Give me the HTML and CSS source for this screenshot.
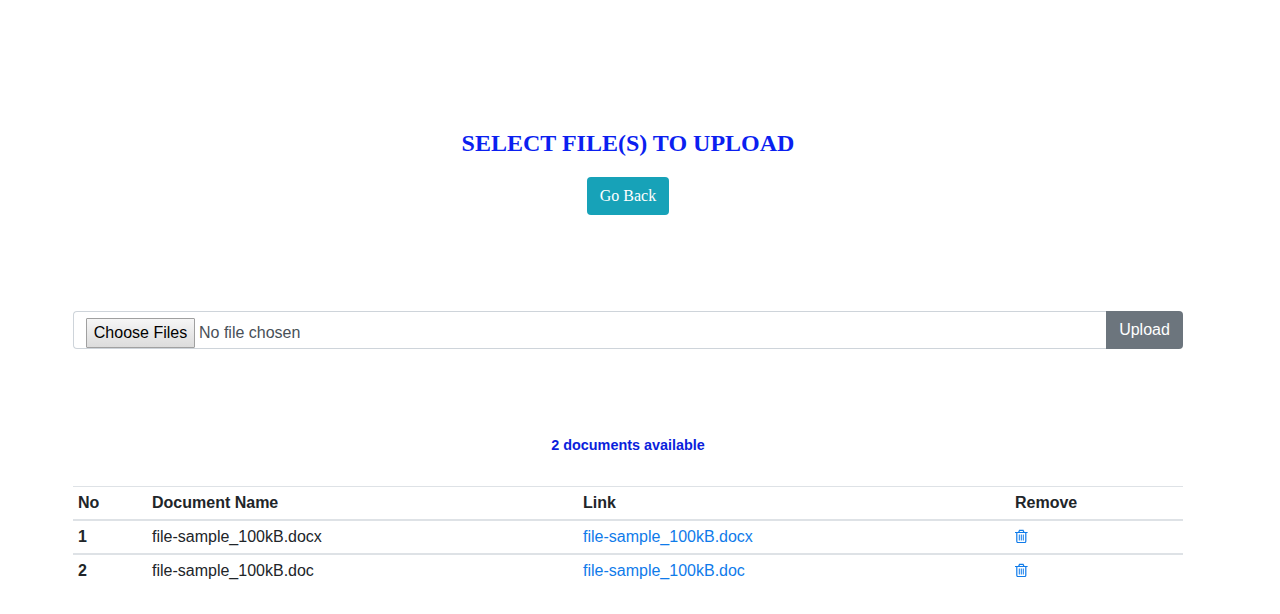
FILE: index.html
```html
<!DOCTYPE html>
<html lang="en">
<head>
<meta charset="utf-8">
<title>Upload files</title>
<link rel="stylesheet" href="styles.css">
</head>
<body>
<main class="container">
  <header class="intro">
    <h1 class="title">SELECT FILE(S) TO UPLOAD</h1>
    <a class="back" href="#">Go Back</a>
  </header>
  <form class="upload">
    <div class="field">
      <button class="choose" type="button">Choose Files</button>
      <span>No file chosen</span>
    </div>
    <button class="submit" type="button">Upload</button>
  </form>
  <h2 class="count">2 documents available</h2>
  <table class="documents">
    <colgroup><col class="col-no"><col class="col-name"><col class="col-link"><col class="col-remove"></colgroup>
    <thead>
      <tr><th>No</th><th>Document Name</th><th>Link</th><th>Remove</th></tr>
    </thead>
    <tbody>
      <tr>
        <th>1</th><td>file-sample_100kB.docx</td><td><a href="#">file-sample_100kB.docx</a></td>
        <td><a href="#" aria-label="Remove"><svg class="trash" viewBox="0 0 13 14"><path d="M0 3.5H12.6M3.7 3.3L4.5 1.4H8.1L8.9 3.3M1.8 3.5V12.3Q1.8 13.5 2.8 13.5H9.8Q10.8 13.5 10.8 12.3V3.5"/><path class="slats" d="M4.3 5.5V11.5M6.3 5.5V11.5M8.3 5.5V11.5"/></svg></a></td>
      </tr>
      <tr>
        <th>2</th><td>file-sample_100kB.doc</td><td><a href="#">file-sample_100kB.doc</a></td>
        <td><a href="#" aria-label="Remove"><svg class="trash" viewBox="0 0 13 14"><path d="M0 3.5H12.6M3.7 3.3L4.5 1.4H8.1L8.9 3.3M1.8 3.5V12.3Q1.8 13.5 2.8 13.5H9.8Q10.8 13.5 10.8 12.3V3.5"/><path class="slats" d="M4.3 5.5V11.5M6.3 5.5V11.5M8.3 5.5V11.5"/></svg></a></td>
      </tr>
    </tbody>
  </table>
</main>
</body>
</html>
```
FILE: styles.css
```css
* { box-sizing: border-box; }
body {
  margin: 0;
  background: #fff;
  color: #212529;
  font: 16px/24px "Liberation Sans", Arial, sans-serif;
}
a { color: #0f7bea; text-decoration: none; }
.container { width: 1110px; margin-left: 73px; padding-top: 129px; }
.intro {
  display: flex;
  flex-direction: column;
  align-items: center;
  font-family: "Liberation Serif", "Times New Roman", serif;
}
.title { margin: 0 0 19px; color: #0b1ff0; font-size: 24px; line-height: 29px; }
.back {
  height: 38px;
  padding: 7px 13px;
  border-radius: 4px;
  background: #17a2b8;
  color: #fff;
}
.upload { display: flex; height: 38px; margin-top: 96px; }
.field {
  display: flex;
  flex: 1;
  gap: 4px;
  padding: 6px 12px 0;
  border: 1px solid #ced4da;
  border-right: 0;
  border-radius: 4px 0 0 4px;
  color: #495057;
  line-height: 30px;
}
.choose {
  width: 109px;
  height: 30px;
  padding: 0;
  border: 1px solid #a0a0a0;
  border-radius: 1px;
  background: linear-gradient(#f6f6f6, #dcdcdc);
  color: #000;
  font: inherit;
  line-height: 28px;
}
.submit {
  width: 77px;
  padding: 0;
  border: 0;
  border-radius: 0 4px 4px 0;
  background: #6c757d;
  color: #fff;
  font: inherit;
}
.count {
  margin: 85px 0 30px;
  color: #0b1fdc;
  font-size: 14.4px;
  line-height: 22px;
  text-align: center;
}
.documents {
  width: 100%;
  border-collapse: separate;
  border-spacing: 0;
  border-top: 1px solid #dee2e6;
  table-layout: fixed;
}
.col-no { width: 74px; }
.col-name { width: 431px; }
.col-link { width: 432px; }
.documents th, .documents td {
  height: 34px;
  padding: 4px 5px;
  text-align: left;
  vertical-align: top;
}
.documents thead th, .documents tbody tr:first-child > * { border-bottom: 2px solid #dee2e6; }
.trash {
  display: block;
  width: 13px;
  height: 14px;
  margin-top: 4px;
  fill: none;
  stroke: currentColor;
  stroke-width: 1.2;
}
.slats { stroke-width: 1; }
```
